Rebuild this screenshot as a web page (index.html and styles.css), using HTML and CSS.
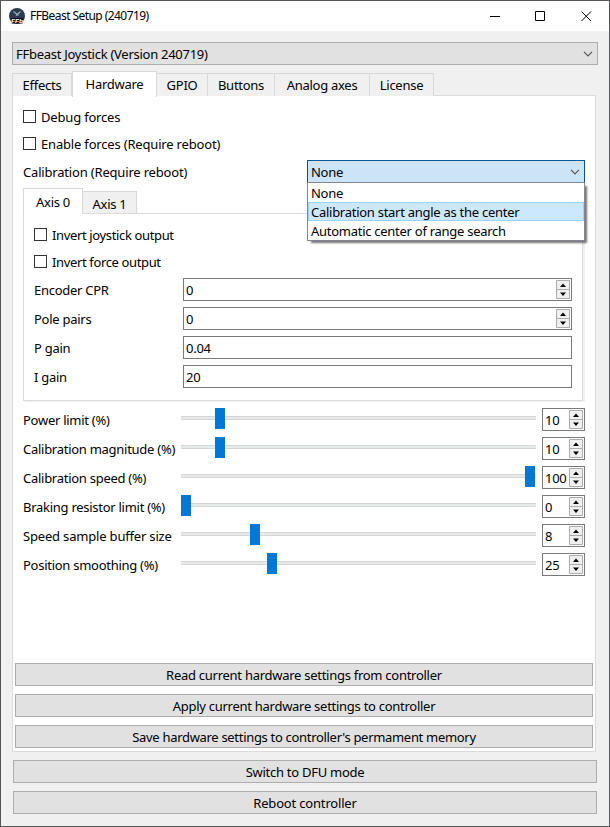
FILE: index.html
```html
<!DOCTYPE html>
<html lang="en">
<head>
<meta charset="utf-8">
<title>FFBeast Setup (240719)</title>
<link rel="stylesheet" href="styles.css">
</head>
<body>
<div class="window">
  <header class="titlebar">
    <svg class="logo" viewBox="0 0 16 16"><circle cx="8" cy="8" r="8" fill="#2b3c50"/><path d="M4.500 3.500l5 4M11.500 3.500L7 7.500" stroke="#9cafbe" stroke-width="1.100" fill="none"/><path d="M2 10h12.500l-1 5.500H2.500z" fill="#0a0f16"/><text x="8" y="15" text-anchor="middle" textLength="12" lengthAdjust="spacingAndGlyphs" class="logo-text">FFb</text></svg>
    <h1>FFBeast Setup (240719)</h1>
    <div class="controls">
      <svg viewBox="0 0 11 11"><path d="M0 5.5h10"/></svg>
      <svg viewBox="0 0 11 11"><path d="M.5.5h9v9h-9z"/></svg>
      <svg viewBox="0 0 11 11"><path d="M.5.5l9.500 9.500M10 .5L.5 10"/></svg>
    </div>
  </header>
  <main>
    <div class="combo device"><span>FFbeast Joystick (Version 240719)</span><svg class="chev" viewBox="0 0 10 6"><path d="M1 .8l4 4 4-4"/></svg></div>
    <nav class="tabs">
      <div class="tab t-effects"><span>Effects</span></div>
      <div class="tab t-hardware selected"><span>Hardware</span></div>
      <div class="tab t-gpio"><span>GPIO</span></div>
      <div class="tab t-buttons"><span>Buttons</span></div>
      <div class="tab t-analog"><span>Analog axes</span></div>
      <div class="tab t-license"><span>License</span></div>
    </nav>
    <section class="panel">
      <div class="settings">
        <div class="check loose"><i></i><span>Debug forces</span></div>
        <div class="check loose"><i></i><span>Enable forces (Require reboot)</span></div>
        <div class="calibration">
          <span class="loose">Calibration (Require reboot)</span>
          <div class="combo open"><span>None</span><svg class="chev" viewBox="0 0 10 6"><path d="M1 .8l4 4 4-4"/></svg>
            <div class="menu">
              <div>None</div>
              <div class="hover">Calibration start angle as the center</div>
              <div>Automatic center of range search</div>
            </div>
          </div>
        </div>
        <div class="axis-tabs">
          <div class="tab axis0 selected"><span>Axis 0</span></div>
          <div class="tab axis1"><span>Axis 1</span></div>
        </div>
        <div class="axis-panel">
          <div class="check tight"><i></i><span>Invert joystick output</span></div>
          <div class="check tight"><i></i><span>Invert force output</span></div>
          <div class="field"><label>Encoder CPR</label><div class="input"><span>0</span><svg class="spin" viewBox="0 0 14 19"><use href="#spin"/></svg></div></div>
          <div class="field"><label>Pole pairs</label><div class="input"><span>0</span><svg class="spin" viewBox="0 0 14 19"><use href="#spin"/></svg></div></div>
          <div class="field"><label>P gain</label><div class="input"><span>0.04</span></div></div>
          <div class="field"><label>I gain</label><div class="input"><span>20</span></div></div>
        </div>
        <div class="sliders">
          <div class="row"><label>Power limit (%)</label><div class="slider"><b style="margin-left:34px"></b></div><div class="input"><span>10</span><svg class="spin" viewBox="0 0 14 19"><use href="#spin"/></svg></div></div>
          <div class="row"><label>Calibration magnitude (%)</label><div class="slider"><b style="margin-left:34px"></b></div><div class="input"><span>10</span><svg class="spin" viewBox="0 0 14 19"><use href="#spin"/></svg></div></div>
          <div class="row"><label>Calibration speed (%)</label><div class="slider"><b style="margin-left:344px"></b></div><div class="input"><span>100</span><svg class="spin" viewBox="0 0 14 19"><use href="#spin"/></svg></div></div>
          <div class="row"><label>Braking resistor limit (%)</label><div class="slider"><b style="margin-left:0px"></b></div><div class="input"><span>0</span><svg class="spin" viewBox="0 0 14 19"><use href="#spin"/></svg></div></div>
          <div class="row"><label class="loose">Speed sample buffer size</label><div class="slider"><b style="margin-left:69px"></b></div><div class="input"><span>8</span><svg class="spin" viewBox="0 0 14 19"><use href="#spin"/></svg></div></div>
          <div class="row"><label>Position smoothing (%)</label><div class="slider"><b style="margin-left:86px"></b></div><div class="input"><span>25</span><svg class="spin" viewBox="0 0 14 19"><use href="#spin"/></svg></div></div>
        </div>
      </div>
      <div class="actions">
        <div class="button"><span>Read current hardware settings from controller</span></div>
        <div class="button"><span>Apply current hardware settings to controller</span></div>
        <div class="button"><span class="save">Save hardware settings to controller's permament memory</span></div>
      </div>
    </section>
    <footer class="actions">
      <div class="button"><span>Switch to DFU mode</span></div>
      <div class="button"><span class="loose">Reboot controller</span></div>
    </footer>
  </main>
</div>
<svg class="defs"><defs><g id="spin"><path d="M.5.5h13v18H.5z" fill="#f0f0f0" stroke="#acacac"/><path d="M0 9.5h14" stroke="#acacac"/><path d="M4 7h6L7 3.500zM4 12.500h6L7 16z" fill="#000"/></g></defs></svg>
</body>
</html>
```
FILE: styles.css
```css
* { box-sizing: border-box; }
body { margin: 0; font: 13px/18px "Noto Sans", "Open Sans", sans-serif; letter-spacing: -.27px; color: #000; overflow: hidden; }
.loose { letter-spacing: -.18px; }
.tight { letter-spacing: -.36px; }
.save { letter-spacing: -.31px; }
.defs { position: absolute; width: 0; height: 0; }
svg { display: block; flex: none; }
span, label { white-space: nowrap; }
.window { width: 610px; height: 827px; border: 1px solid #55565a; background: #f0f0f0; }
.titlebar { height: 30px; background: #fff; display: flex; align-items: center; padding: 0 17px 0 8px; }
.logo { width: 16px; height: 16px; margin-right: 5px; }
.logo-text { font: italic bold 6px "Liberation Sans", sans-serif; letter-spacing: 0; fill: #fff; }
h1 { font-size: 12px; font-weight: 400; margin: 0; flex: 1; white-space: nowrap; letter-spacing: -.56px; }
.controls { display: flex; gap: 35px; }
.controls svg { width: 11px; height: 11px; fill: none; stroke: #000; }
.controls svg:first-child { margin-right: -1px; }
main { padding: 11px 12px 0 11px; }
.combo { height: 23px; border: 1px solid #adadad; background: #e1e1e1; display: flex; align-items: center; justify-content: space-between; padding: 1px 4px 0 3px; }
.device { width: 586px; }
.chev { width: 10px; height: 6px; fill: none; stroke: #555; stroke-width: 1.2; margin-top: -1px; }
.tabs { display: flex; align-items: flex-end; height: 25px; margin-top: 6px; position: relative; }
.tab { height: 23px; border: 1px solid #d9d9d9; border-width: 1px 1px 0 0; display: flex; align-items: center; justify-content: center; background: #f0f0f0; }
.tab.selected { height: 26px; background: #fff; border-left-width: 1px; margin-bottom: -1px; padding-bottom: 1px; }
.tabs .tab:first-child { border-left-width: 1px; }
.t-effects { width: 60px; }
.t-hardware { width: 85px; }
.t-gpio { width: 51px; }
.t-buttons { width: 67px; }
.t-analog { width: 95px; }
.t-license { width: 64px; }
.panel { width: 584px; height: 657px; margin-top: -1px; background: #fff; border: 1px solid #dcdcdc; padding: 14px 2px 3px; display: flex; flex-direction: column; justify-content: space-between; }
.settings { padding: 0 8px; }
.check { display: flex; align-items: center; height: 13px; gap: 5px; margin-bottom: 14px; }
.check i { width: 13px; height: 13px; border: 1px solid #333; background: #fff; }
.calibration { display: flex; justify-content: space-between; align-items: center; height: 23px; margin-top: -4px; }
.calibration > span { padding-top: 1px; }
.open { width: 278px; position: relative; background: #cce4f7; border-color: #005499; }
.menu { position: absolute; left: -1px; top: 21px; width: 278px; height: 59px; border: 1px solid #828790; background: #fff; box-shadow: 3px 3px 2px -1px rgba(0,0,0,.55); z-index: 3; }
.menu div { height: 19px; line-height: 20px; border: 1px solid transparent; border-width: 0 1px; padding: 0 2px; }
.menu .hover { background: #cce8ff; border: 1px solid #99d1ff; line-height: 18px; }
.axis-tabs { display: flex; align-items: flex-end; margin-top: 6px; height: 24px; position: relative; }
.axis-tabs .selected { padding-bottom: 0; padding-top: 1px; }
.axis0 { width: 60px; }
.axis1 { width: 54px; height: 22px; padding-top: 2px; }
.axis-panel { width: 560px; height: 188px; margin-bottom: 1px; border: 1px solid #dcdcdc; box-shadow: 2px 1px #f0f0f0; padding: 14px 10px 0; }
.field { display: flex; height: 23px; margin-bottom: 6px; align-items: center; justify-content: space-between; }
.axis-panel .check + .field { margin-top: -4px; }
.input { height: 23px; border: 1px solid #7a7a7a; background: #fff; display: flex; justify-content: space-between; padding: 1px 1px 1px 2px; }
.input span { padding-top: 1px; }
.field .input { width: 389px; }
.field label { padding-top: 1px; }
.row label { padding-top: 3px; }
.spin { width: 14px; height: 19px; }
.sliders { padding-top: 6px; }
.row { display: grid; grid-template-columns: 158px 355px 49px; height: 23px; margin-bottom: 6px; }
.row .input { margin-left: 6px; width: 43px; }
.slider { height: 21px; background: linear-gradient(#d6d6d6 0 1px, #e7eaea 1px 3px, #d6d6d6 3px) 0 8px / 100% 4px no-repeat; }
.slider b { display: block; width: 10px; height: 21px; background: #0078d7; }
.actions { display: flex; flex-direction: column; gap: 8px; }
footer.actions { width: 584px; margin: 8px 0 0 1px; }
.button { height: 23px; border: 1px solid #adadad; background: #e1e1e1; display: flex; justify-content: center; align-items: center; padding-top: 1px; }
```
